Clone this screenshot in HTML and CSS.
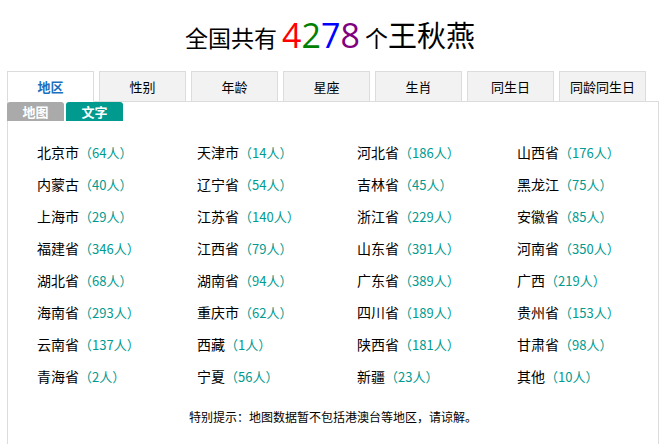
FILE: index.html
```html
<!DOCTYPE html>
<html lang="zh-CN">

<head>
    <meta charset="UTF-8">
    <title>王秋燕 - 姓名分布</title>
    <link rel="stylesheet" href="styles.css">
</head>

<body>
    <h1 class="title">全国共有 <span class="num"><span class="n1">4</span><span class="n2">2</span><span class="n3">7</span><span class="n4">8</span></span> 个<span class="name">王秋燕</span></h1>

    <ul class="tabs">
        <li class="tab active">地区</li>
        <li class="tab">性别</li>
        <li class="tab">年龄</li>
        <li class="tab">星座</li>
        <li class="tab">生肖</li>
        <li class="tab">同生日</li>
        <li class="tab">同龄同生日</li>
    </ul>

    <div class="panel">
        <div class="sub-tabs">
            <span class="sub-tab">地图</span>
            <span class="sub-tab current">文字</span>
        </div>

        <ul class="area-list">
            <li>北京市<span class="count">（64人）</span></li>
            <li>天津市<span class="count">（14人）</span></li>
            <li>河北省<span class="count">（186人）</span></li>
            <li>山西省<span class="count">（176人）</span></li>
            <li>内蒙古<span class="count">（40人）</span></li>
            <li>辽宁省<span class="count">（54人）</span></li>
            <li>吉林省<span class="count">（45人）</span></li>
            <li>黑龙江<span class="count">（75人）</span></li>
            <li>上海市<span class="count">（29人）</span></li>
            <li>江苏省<span class="count">（140人）</span></li>
            <li>浙江省<span class="count">（229人）</span></li>
            <li>安徽省<span class="count">（85人）</span></li>
            <li>福建省<span class="count">（346人）</span></li>
            <li>江西省<span class="count">（79人）</span></li>
            <li>山东省<span class="count">（391人）</span></li>
            <li>河南省<span class="count">（350人）</span></li>
            <li>湖北省<span class="count">（68人）</span></li>
            <li>湖南省<span class="count">（94人）</span></li>
            <li>广东省<span class="count">（389人）</span></li>
            <li>广西<span class="count">（219人）</span></li>
            <li>海南省<span class="count">（293人）</span></li>
            <li>重庆市<span class="count">（62人）</span></li>
            <li>四川省<span class="count">（189人）</span></li>
            <li>贵州省<span class="count">（153人）</span></li>
            <li>云南省<span class="count">（137人）</span></li>
            <li>西藏<span class="count">（1人）</span></li>
            <li>陕西省<span class="count">（181人）</span></li>
            <li>甘肃省<span class="count">（98人）</span></li>
            <li>青海省<span class="count">（2人）</span></li>
            <li>宁夏<span class="count">（56人）</span></li>
            <li>新疆<span class="count">（23人）</span></li>
            <li>其他<span class="count">（10人）</span></li>
        </ul>

        <p class="note">特别提示：地图数据暂不包括港澳台等地区，请谅解。</p>
    </div>
</body>

</html>
```

FILE: styles.css
```css
:root {
    --border-color: #dcdcdc;
    --tab-bg: #f2f2f2;
    --active-color: #1a6fc0;
    --teal: #009a8f;
    --gray: #aaaaaa;
}

body {
    font-family: "Noto Sans CJK SC", "Noto Sans", sans-serif;
    margin: 0;
    padding: 0;
    color: #000;
    background-color: #fff;
}

.title {
    margin: 0;
    height: 71px;
    line-height: 68px;
    text-align: center;
    font-size: 23px;
    font-weight: normal;
}

.num {
    font-size: 34px;
    font-family: "Open Sans", "Noto Sans", sans-serif;
    vertical-align: -1px;
}

.name {
    font-size: 29px;
}

.n1 { color: #ff0000; }
.n2 { color: #008000; }
.n3 { color: #0000ff; }
.n4 { color: #800080; }

.tabs {
    list-style: none;
    margin: 0 0 0 7px;
    padding: 0;
    width: 652px;
    display: flex;
    gap: 5px;
    border-bottom: 1px solid var(--border-color);
}

.tab {
    box-sizing: border-box;
    width: 87px;
    height: 31px;
    line-height: 30px;
    margin-bottom: -1px;
    text-align: center;
    font-size: 13px;
    background-color: var(--tab-bg);
    border: 1px solid var(--border-color);
}

.tab.active {
    background-color: #fff;
    border-bottom-color: #fff;
    color: var(--active-color);
    font-weight: bold;
}

.panel {
    box-sizing: border-box;
    margin-left: 7px;
    width: 652px;
    border-left: 1px solid var(--border-color);
    border-right: 1px solid var(--border-color);
    padding-bottom: 20px;
}

.sub-tabs {
    display: flex;
    gap: 2px;
    margin-left: -1px;
}

.sub-tab {
    width: 57px;
    height: 19px;
    line-height: 19px;
    text-align: center;
    font-size: 13px;
    font-weight: bold;
    color: #fff;
    background-color: var(--gray);
    border-radius: 3px 3px 0 0;
}

.sub-tab.current {
    background-color: var(--teal);
}

.area-list {
    list-style: none;
    margin: 15px 0 0 0;
    padding: 0 0 0 29px;
    display: grid;
    grid-template-columns: repeat(4, 160px);
}

.area-list li {
    height: 32px;
    line-height: 32px;
    font-size: 14px;
    white-space: nowrap;
}

.count {
    color: var(--teal);
    font-size: 13px;
}

.note {
    margin: 15px 0 0 0;
    line-height: 20px;
    text-align: center;
    font-size: 12px;
}
```
